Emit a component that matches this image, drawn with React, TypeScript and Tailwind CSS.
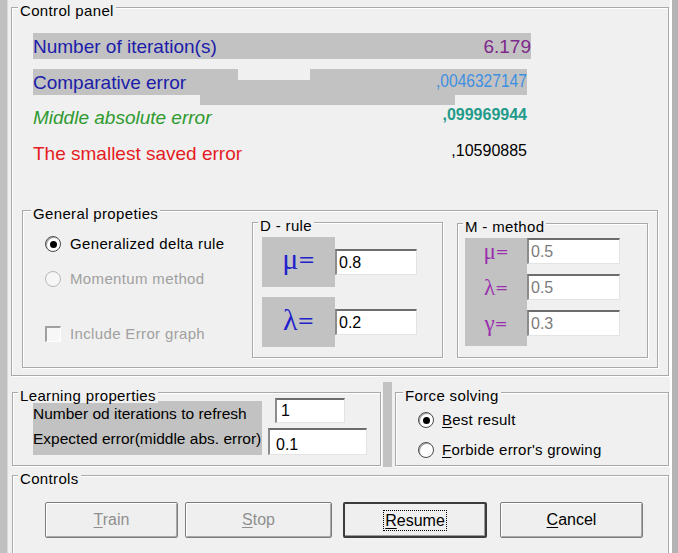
import React from 'react';

const sans = 'font-[family-name:Liberation_Sans,Arial,sans-serif]';
const serif = 'font-serif';

type GroupProps = {
  title: string;
  className: string;
  labelClass?: string;
  children?: React.ReactNode;
};

const GroupBox: React.FC<GroupProps> = ({ title, className, labelClass = 'left-[5px]', children }) => (
  <div
    className={`relative shrink-0 border border-[#a9a9a9] shadow-[inset_1px_1px_0_#ffffff,1px_1px_0_#ffffff] ${className}`}
  >
    <span
      className={`absolute -top-[5px] ${labelClass} bg-[#f0f0f0] px-[2px] text-[15px] leading-[15px] tracking-[0.35px] text-black whitespace-nowrap`}
    >
      {title}
    </span>
    {children}
  </div>
);

const TextBox: React.FC<{ value: string; className: string; disabled?: boolean }> = ({
  value,
  className,
  disabled,
}) => (
  <div
    className={`shrink-0 flex items-center bg-white border-t-2 border-l-2 border-r border-b border-t-[#6d6d6d] border-l-[#8c8c8c] border-r-[#e3e3e3] border-b-[#e3e3e3] pl-[2px] text-[16px] leading-none ${
      disabled ? 'text-[#7c7c7c]' : 'text-black'
    } ${className}`}
  >
    {value}
  </div>
);

const Radio: React.FC<{ checked?: boolean; disabled?: boolean }> = ({ checked, disabled }) => (
  <span
    className={`w-[16px] h-[16px] shrink-0 rounded-full border flex items-center justify-center ${
      disabled
        ? 'border-[#b8b8b8] bg-[#f6f6f6]'
        : 'border-[#4a4a4a] bg-white shadow-[inset_1px_1px_0_#a0a0a0]'
    }`}
  >
    {checked && <span className="w-[7px] h-[7px] rounded-full bg-black" />}
  </span>
);

type BtnProps = {
  first: string;
  rest: string;
  className: string;
  disabled?: boolean;
  focused?: boolean;
};

const Btn: React.FC<BtnProps> = ({ first, rest, className, disabled, focused }) => (
  <div
    className={`shrink-0 h-[36px] flex items-center justify-center rounded-[2px] bg-[#efefef] text-[16px] ${
      focused
        ? 'border-2 border-[#3c3c3c] shadow-[inset_-1px_-1px_0_#9a9a9a]'
        : 'border border-[#7c7c7c] shadow-[inset_1px_1px_0_#ffffff,inset_-1px_-1px_0_#a8a8a8]'
    } ${disabled ? 'text-[#8f8f8f]' : 'text-black'} ${className}`}
  >
    <span className={focused ? 'border border-dotted border-black px-[1px] leading-[19px]' : ''}>
      <span className="underline underline-offset-[2px]">{first}</span>
      {rest}
    </span>
  </div>
);

export default function App() {
  return (
    <div className={`w-[678px] h-[553px] overflow-hidden flex bg-[#f0f0f0] ${sans}`}>
      <div className="w-[8px] shrink-0 bg-[#c0c0c0] border-r border-r-[#dadada]" />

      <div className="w-[662px] shrink-0 flex flex-col">
        {/* Control panel */}
        <GroupBox title="Control panel" className="ml-[3px] mt-[7px] w-[658px] h-[369px]" labelClass="left-[6px]">
          <div className="pl-[21px] pt-[25px]">
            <div className="w-[498px] h-[26px] bg-[#c2c2c2] flex items-center justify-between">
              <span className="text-[19px] leading-none text-[#1c1caa]">Number of iteration(s)</span>
              <span className="text-[19px] leading-none text-[#7d2a8a]">6.179</span>
            </div>

            <div className="relative mt-[10px] w-[494px] h-[26px]">
              <div className="absolute left-[167px] top-[11px] w-[255px] h-[25px] bg-[#c2c2c2]" />
              <div className="flex h-full">
                <div className="relative w-[205px] h-full bg-[#c2c2c2] flex items-center">
                  <span className="text-[19px] leading-none text-[#1c1caa]">Comparative error</span>
                </div>
                <div className="w-[72px]" />
                <div className="relative w-[217px] h-full bg-[#c2c2c2] flex items-center justify-end pb-[3px]">
                  <span className="inline-block origin-right scale-x-[0.82] text-[19px] leading-none text-[#3d8fe0]">
                    ,0046327147
                  </span>
                </div>
              </div>
            </div>

            <div className="mt-[9px] w-[494px] h-[26px] flex items-center justify-between">
              <span className="text-[19px] leading-none italic text-[#2f9a2f]">Middle absolute error</span>
              <span className="text-[16px] leading-none font-bold text-[#239b8a] pb-[4px]">,099969944</span>
            </div>

            <div className="mt-[10px] w-[494px] h-[26px] flex items-center justify-between">
              <span className="text-[19px] leading-none text-[#e51c23]">The smallest saved error</span>
              <span className="text-[16px] leading-none text-black pb-[4px]">,10590885</span>
            </div>
          </div>

          {/* General properties */}
          <GroupBox title="General propeties" className="ml-[10px] mt-[44px] w-[636px] h-[158px]" labelClass="left-[8px]">
            <div className="flex">
              <div className="w-[229px] shrink-0 pl-[22px] pt-[23px] text-[15px] tracking-[0.35px] whitespace-nowrap">
                <div className="h-[20px] flex items-center gap-[9px] text-black">
                  <Radio checked />
                  <span>Generalized delta rule</span>
                </div>
                <div className="mt-[15px] h-[20px] flex items-center gap-[9px] text-[#a0a0a0]">
                  <Radio disabled />
                  <span>Momentum method</span>
                </div>
                <div className="mt-[35px] h-[20px] flex items-center gap-[9px] text-[#a0a0a0]">
                  <span className="w-[16px] h-[16px] shrink-0 bg-[#f7f7f7] border-t-2 border-l-2 border-r border-b border-t-[#a0a0a0] border-l-[#a0a0a0] border-r-[#ffffff] border-b-[#ffffff]" />
                  <span>Include Error graph</span>
                </div>
              </div>

              <GroupBox title="D - rule" className="mt-[11px] w-[191px] h-[136px]">
                <div className="pl-[9px] pt-[14px]">
                  <div className="flex items-center">
                    <div className="w-[73px] h-[50px] bg-[#c2c2c2] flex items-center justify-center pb-[4px]">
                      <span className={`${serif} text-[30px] leading-none text-[#2222cc]`}>μ=</span>
                    </div>
                    <TextBox value="0.8" className="w-[82px] h-[26px]" />
                  </div>
                  <div className="mt-[10px] flex items-center">
                    <div className="w-[73px] h-[50px] bg-[#c2c2c2] flex items-center justify-center pb-[2px]">
                      <span className={`${serif} text-[30px] leading-none text-[#2222cc]`}>λ=</span>
                    </div>
                    <TextBox value="0.2" className="w-[82px] h-[26px]" />
                  </div>
                </div>
              </GroupBox>

              <GroupBox title="M - method" className="ml-[14px] mt-[12px] w-[191px] h-[135px]">
                <div className="pl-[7px] pt-[14px] flex">
                  <div className="w-[62px] h-[108px] bg-[#c2c2c2] flex flex-col gap-[10px]">
                    {['μ=', 'λ=', 'γ='].map((s) => (
                      <div key={s} className="h-[26px] flex items-center justify-center">
                        <span className={`${serif} text-[23px] leading-none text-[#9b2fae]`}>{s}</span>
                      </div>
                    ))}
                  </div>
                  <div className="flex flex-col gap-[10px]">
                    <TextBox value="0.5" className="w-[93px] h-[26px]" disabled />
                    <TextBox value="0.5" className="w-[93px] h-[26px]" disabled />
                    <TextBox value="0.3" className="w-[93px] h-[26px]" disabled />
                  </div>
                </div>
              </GroupBox>
            </div>
          </GroupBox>
        </GroupBox>

        {/* Learning / force solving */}
        <div className="mt-[6px] flex items-start">
          <GroupBox title="Learning properties" className="ml-[4px] mt-[10px] w-[369px] h-[74px]">
            <div className="flex pl-[20px] pt-[5px]">
              <div className="mt-[3px] w-[229px] h-[54px] shrink-0 bg-[#c2c2c2] text-[15.5px] text-black whitespace-nowrap">
                <div className="h-[25px] flex items-center">Number od iterations to refresh</div>
                <div className="h-[25px] flex items-center">Expected error(middle abs. error)</div>
              </div>
              <div className="flex flex-col items-start">
                <TextBox value="1" className="ml-[13px] w-[70px] h-[25px] pl-[4px]" />
                <TextBox value="0.1" className="mt-[5px] ml-[6px] w-[99px] h-[27px] pl-[6px] pt-[5px]" />
              </div>
            </div>
          </GroupBox>

          <div className="ml-[2px] w-[9px] h-[85px] shrink-0 bg-[#c2c2c2]" />

          <GroupBox title="Force solving" className="ml-[3px] mt-[10px] w-[274px] h-[74px]" labelClass="left-[7px]">
            <div className="pl-[22px] pt-[17px] text-[15px] tracking-[0.25px] text-black whitespace-nowrap">
              <div className="h-[20px] flex items-center gap-[8px]">
                <Radio checked />
                <span>
                  <span className="underline underline-offset-[2px]">B</span>est result
                </span>
              </div>
              <div className="mt-[10px] h-[20px] flex items-center gap-[8px]">
                <Radio />
                <span>
                  <span className="underline underline-offset-[2px]">F</span>orbide error's growing
                </span>
              </div>
            </div>
          </GroupBox>
        </div>

        {/* Controls */}
        <GroupBox title="Controls" className="ml-[4px] mt-[8px] w-[657px] h-[90px]">
          <div className="flex pl-[32px] pt-[26px]">
            <Btn first="T" rest="rain" className="w-[133px]" disabled />
            <Btn first="S" rest="top" className="ml-[7px] w-[147px]" disabled />
            <Btn first="R" rest="esume" className="ml-[11px] w-[144px]" focused />
            <Btn first="C" rest="ancel" className="ml-[13px] w-[143px]" />
          </div>
        </GroupBox>
      </div>

      <div className="w-[8px] shrink-0 bg-[#b4b4b4] border-l-2 border-l-[#ffffff]" />
    </div>
  );
}
